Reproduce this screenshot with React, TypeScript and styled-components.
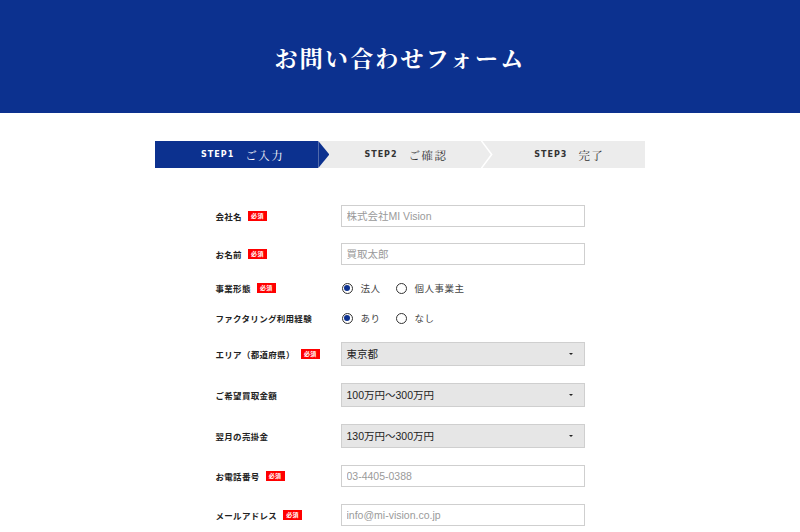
import React from "react";
import styled, { createGlobalStyle, css } from "styled-components";

const Global = createGlobalStyle`
  html, body { margin: 0; padding: 0; background: #fff; }
  body { font-family: "Noto Sans CJK JP", "Noto Sans", "Liberation Sans", sans-serif; color: #333; }
  * { box-sizing: border-box; }
`;

const BLUE = "#0c318f";

const Header = styled.header`
  height: 113px;
  background: ${BLUE};
  display: flex;
  align-items: center;
  justify-content: center;
`;

const Title = styled.h1`
  margin: 0;
  color: #fff;
  font-family: "Noto Serif CJK JP", "Noto Sans CJK JP", serif;
  font-weight: 700;
  font-size: 23px;
  letter-spacing: 2.2px;
  padding-top: 2px;
`;

const Steps = styled.div`
  width: 490px;
  height: 27px;
  margin: 28px auto 0;
  display: grid;
  grid-template-columns: repeat(3, 1fr);
  background: #ececec;
`;

const Step = styled.div<{ $active?: boolean; $chevron?: boolean }>`
  position: relative;
  display: flex;
  align-items: center;
  justify-content: center;
  padding-left: 12px;
  gap: 11px;
  color: #333;
  ${(p) =>
    p.$active &&
    css`
      background: ${BLUE};
      color: #fff;
      &::after {
        content: "";
        position: absolute;
        right: -11px;
        top: 0;
        width: 11px;
        height: 27px;
        background: ${BLUE};
        clip-path: polygon(0 0, 100% 50%, 0 100%);
        z-index: 1;
      }
    `}
  ${(p) =>
    p.$chevron &&
    css`
      &::after {
        content: "";
        position: absolute;
        right: -11px;
        top: 0;
        width: 12px;
        height: 27px;
        background: #fff;
        clip-path: polygon(0 0, 1.8px 0, 100% 50%, 1.8px 100%, 0 100%, 10px 50%);
        z-index: 1;
      }
    `}
`;

const StepNo = styled.span`
  font-family: "DejaVu Sans", "Liberation Sans", sans-serif;
  font-weight: 700;
  font-size: 8px;
  letter-spacing: 1px;
`;

const StepName = styled.span`
  font-family: "Noto Serif CJK JP", "Noto Sans CJK JP", serif;
  font-size: 11.5px;
  letter-spacing: 1.5px;
`;

const Form = styled.form`
  width: 369px;
  margin: 28px auto 0;
`;

const Row = styled.div<{ $h: number }>`
  height: ${(p) => p.$h}px;
  display: grid;
  grid-template-columns: 125px 244px;
  align-items: center;
`;

const Label = styled.label`
  display: flex;
  align-items: center;
  gap: 6px;
  font-size: 8.5px;
  font-weight: 700;
  letter-spacing: 0.3px;
  color: #222;
`;

const Req = styled.span`
  display: inline-flex;
  align-items: center;
  justify-content: center;
  width: 19px;
  height: 10px;
  background: #ff0000;
  color: #fff;
  font-size: 6px;
  font-weight: 700;
  line-height: 1;
`;

const Input = styled.input`
  width: 244px;
  height: 22px;
  border: 1px solid #cfcfcf;
  padding: 0 5px;
  font-family: "Liberation Sans", "Noto Sans CJK JP", sans-serif;
  font-size: 10.5px;
  color: #333;
  outline: none;
  &::placeholder { color: #9a9a9a; }
`;

const Select = styled.div`
  width: 244px;
  height: 24px;
  border: 1px solid #cfcfcf;
  background: #e6e6e6;
  display: flex;
  align-items: center;
  justify-content: space-between;
  padding: 0 11px 0 5px;
  font-family: "Liberation Sans", "Noto Sans CJK JP", sans-serif;
  font-size: 10.5px;
  color: #222;
`;

const Caret = styled.span`
  width: 0;
  height: 0;
  border-left: 2.5px solid transparent;
  border-right: 2.5px solid transparent;
  border-top: 2.5px solid #222;
`;

const Radios = styled.div`
  display: flex;
  align-items: center;
  gap: 14px;
`;

const RadioItem = styled.span`
  display: inline-flex;
  align-items: center;
  gap: 8px;
  font-size: 9.5px;
  color: #444;
  letter-spacing: 0.5px;
`;

const Circle = styled.span<{ $on?: boolean }>`
  width: 11px;
  height: 11px;
  border-radius: 50%;
  border: 1px solid #333;
  display: inline-flex;
  align-items: center;
  justify-content: center;
  margin-left: 1px;
  &::before {
    content: "";
    width: 6px;
    height: 6px;
    border-radius: 50%;
    background: ${(p) => (p.$on ? BLUE : "transparent")};
  }
`;

const Radio = ({ on, children }: { on?: boolean; children: React.ReactNode }) => (
  <RadioItem>
    <Circle $on={on} />
    {children}
  </RadioItem>
);

export default function App() {
  return (
    <>
      <Global />
      <Header>
        <Title>お問い合わせフォーム</Title>
      </Header>
      <Steps>
        <Step $active>
          <StepNo>STEP1</StepNo>
          <StepName>ご入力</StepName>
        </Step>
        <Step $chevron>
          <StepNo>STEP2</StepNo>
          <StepName>ご確認</StepName>
        </Step>
        <Step>
          <StepNo>STEP3</StepNo>
          <StepName>完了</StepName>
        </Step>
      </Steps>
      <Form>
        <Row $h={39}>
          <Label>会社名<Req>必須</Req></Label>
          <Input placeholder="株式会社MI Vision" />
        </Row>
        <Row $h={37}>
          <Label>お名前<Req>必須</Req></Label>
          <Input placeholder="買取太郎" />
        </Row>
        <Row $h={32}>
          <Label>事業形態<Req>必須</Req></Label>
          <Radios>
            <Radio on>法人</Radio>
            <Radio>個人事業主</Radio>
          </Radios>
        </Row>
        <Row $h={28}>
          <Label>ファクタリング利用経験</Label>
          <Radios>
            <Radio on>あり</Radio>
            <Radio>なし</Radio>
          </Radios>
        </Row>
        <Row $h={43}>
          <Label>エリア（都道府県）<Req>必須</Req></Label>
          <Select>東京都<Caret /></Select>
        </Row>
        <Row $h={39}>
          <Label>ご希望買取金額</Label>
          <Select>100万円～300万円<Caret /></Select>
        </Row>
        <Row $h={43}>
          <Label>翌月の売掛金</Label>
          <Select>130万円～300万円<Caret /></Select>
        </Row>
        <Row $h={38}>
          <Label>お電話番号<Req>必須</Req></Label>
          <Input placeholder="03-4405-0388" />
        </Row>
        <Row $h={39}>
          <Label>メールアドレス<Req>必須</Req></Label>
          <Input placeholder="info@mi-vision.co.jp" />
        </Row>
      </Form>
    </>
  );
}
